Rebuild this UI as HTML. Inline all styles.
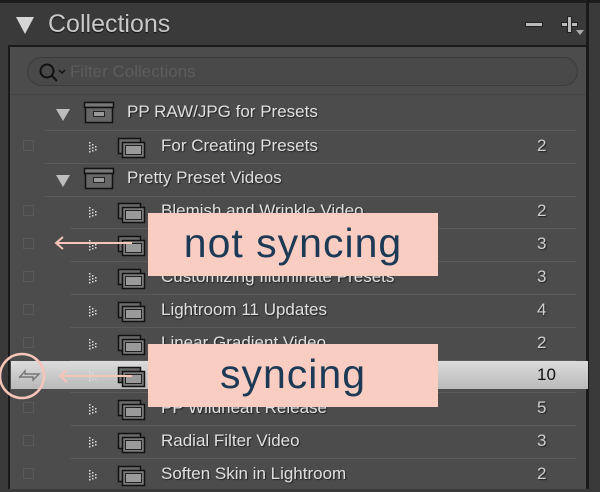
<!DOCTYPE html>
<html><head><meta charset="utf-8"><style>
*{margin:0;padding:0;box-sizing:border-box}
body{width:600px;height:489px;overflow:hidden;background:#3a3a3a;font-family:"Liberation Sans",sans-serif;position:relative}
.top{position:absolute;left:0;top:0;width:600px;height:3px;background:#1e1e1e}
.rb{position:absolute;left:586px;top:0;width:3px;height:489px;background:#1a1a1a}
.hdr{position:absolute;left:48px;top:10px;font-size:25px;color:#c8c8c8;text-shadow:0 1px 1px #111}
.tri{position:absolute;left:16px;top:17px;width:0;height:0;border-left:9px solid transparent;border-right:9px solid transparent;border-top:17px solid #d6d6d6}
.panel{position:absolute;left:8px;top:45px;width:581px;height:444px;background:#4c4c4c;border-top:2px solid #1a1a1a;border-left:2px solid #1a1a1a;border-right:3px solid #1a1a1a}
.search{position:absolute;left:27px;top:57px;width:551px;height:29px;border:1px solid #3c3c3c;border-radius:15px;background:#494949}
.search span{position:absolute;left:42px;top:4px;font-size:17px;color:#5c5c5c}
.sep{position:absolute;height:1px;background:#5a5a5a}
.row{position:absolute;left:0;width:589px;height:33px}
.t{position:absolute;top:6px;font-size:17px;color:#e0e0e0;text-shadow:1px 1px 1px #222;white-space:nowrap}
.n{position:absolute;left:537px;top:6px;font-size:17px;color:#cfcfcf;text-shadow:1px 1px 1px #222}
.cb{position:absolute;left:23px;top:10px;width:11px;height:11px;border:1px solid #595959}
.dt{position:absolute;left:88px;top:10px}
.ic{position:absolute;left:117px;top:7px}
.stri{position:absolute;left:56px;top:12px;border-left:7px solid transparent;border-right:7px solid transparent;border-top:12px solid #bdbdbd}
.lbl{position:absolute;left:148px;width:290px;height:63px;background:#f9cdc2;color:#1c3a55;font-size:41px;text-align:center;line-height:60px;letter-spacing:1px}
</style></head><body>
<div class="top"></div>
<div class="tri"></div>
<div class="hdr">Collections</div>
<div style="position:absolute;left:525px;top:22px;width:18px;height:5px;background:#bbb;border:1px solid #222"></div>
<div style="position:absolute;left:561px;top:22px;width:17px;height:5px;background:#bbb;border:1px solid #222"></div>
<div style="position:absolute;left:567px;top:16px;width:5px;height:17px;background:#bbb;border:1px solid #222"></div>
<div style="position:absolute;left:576px;top:30px;border-left:4px solid transparent;border-right:4px solid transparent;border-top:5px solid #aaa"></div>
<div class="panel"></div>
<div class="rb"></div>
<div class="search"><svg width="40" height="28" style="position:absolute;left:6px;top:0"><circle cx="13" cy="13" r="6.5" fill="none" stroke="#111" stroke-width="2"/><line x1="18" y1="18" x2="23" y2="23" stroke="#111" stroke-width="2"/><polyline points="25,12 28,15 31,12" fill="none" stroke="#111" stroke-width="1.5"/></svg><span>Filter Collections</span></div>
<div class="sep" style="left:10px;top:94px;width:576px;background:#444"></div>

<div id="rows"></div>
<script>
const rows=[
["s","PP RAW/JPG for Presets",""],["c","For Creating Presets","2"],["s","Pretty Preset Videos",""],
["c","Blemish and Wrinkle Video","2"],["c","Clone Tool Video","3"],["c","Customizing Illuminate Presets","3"],
["c","Lightroom 11 Updates","4"],["c","Linear Gradient Video","2"],["sel","Pretty Preset Favorites","10"],
["c","PP Wildheart Release","5"],["c","Radial Filter Video","3"],["c","Soften Skin in Lightroom","2"]];
const coll='<svg width="30" height="22"><rect x="1.5" y="1.5" width="22" height="15" fill="#6a6a6a" stroke="#111" stroke-width="1.5"/><rect x="5.5" y="5.5" width="22" height="15" fill="#7a7a7a" stroke="#111" stroke-width="1.5"/><rect x="8.5" y="8.5" width="16" height="9" fill="#9a9a9a" stroke="#222"/></svg>';
const set='<svg width="34" height="24"><rect x="1.5" y="1.5" width="29" height="5" fill="#777" stroke="#111" stroke-width="1.5"/><rect x="2.5" y="6.5" width="27" height="15" fill="#666" stroke="#111" stroke-width="1.5"/><rect x="10.5" y="10.5" width="11" height="5" fill="#999" stroke="#222"/></svg>';
const dots='<svg width="12" height="12" fill="#ddd"><rect x="1" y="1" width="1.5" height="1.5"/><rect x="1" y="4" width="1.5" height="1.5"/><rect x="1" y="7" width="1.5" height="1.5"/><rect x="1" y="10" width="1.5" height="1.5"/><rect x="4" y="3" width="1.5" height="1.5"/><rect x="4" y="6" width="1.5" height="1.5"/><rect x="4" y="9" width="1.5" height="1.5"/><rect x="7" y="5" width="1.5" height="1.5"/><rect x="7" y="8" width="1.5" height="1.5"/></svg>';
let h='';
rows.forEach((r,i)=>{const y=97+i*32.8;
 if(r[0]=="s"){h+=`<div class="row" style="top:${y}px"><div class="stri"></div><div style="position:absolute;left:83px;top:4px">${set}</div><div class="t" style="left:127px;top:5px">${r[1]}</div></div>`;}
 else{const sel=r[0]=="sel";
 h+=`<div class="row" style="top:${y}px">${sel?'<div style="position:absolute;left:11px;top:2px;width:577px;height:28px;background:linear-gradient(#dcdcdc,#b9b9b9)"></div><svg style="position:absolute;left:16px;top:9px" width="26" height="14"><path d="M3 10 L9 3 L9 6 L23 6 L17 12 L17 9 L3 9" fill="none" stroke="#777" stroke-width="1.5"/></svg>':'<div class="cb"></div>'}<div class="dt">${dots}</div><div class="ic">${coll}</div><div class="t" style="left:161px;${sel?'color:#111;text-shadow:none':''}">${r[1]}</div><div class="n" style="${sel?'color:#111;text-shadow:none':''}">${r[2]}</div></div>`;}
 if(i<rows.length-1){const l=(r[0]=="s"||rows[i+1][0]=="s")?45:70;h+=`<div class="sep" style="left:${l}px;top:${y+33}px;width:${576-l}px"></div>`;}
});
document.getElementById('rows').innerHTML=h;
</script>
<div class="lbl" style="top:213px">not syncing</div>
<div class="lbl" style="top:344px">syncing</div>
<svg width="600" height="489" style="position:absolute;left:0;top:0">
<g stroke="#f6c4b8" stroke-width="2" fill="none">
<line x1="56" y1="243" x2="132" y2="243"/><polyline points="63,237 56,243 63,249"/>
<line x1="60" y1="376" x2="132" y2="376"/><polyline points="67,370 60,376 67,382"/>
<circle cx="22" cy="376" r="22" stroke-width="2.5"/>
</g></svg>
</body></html>
